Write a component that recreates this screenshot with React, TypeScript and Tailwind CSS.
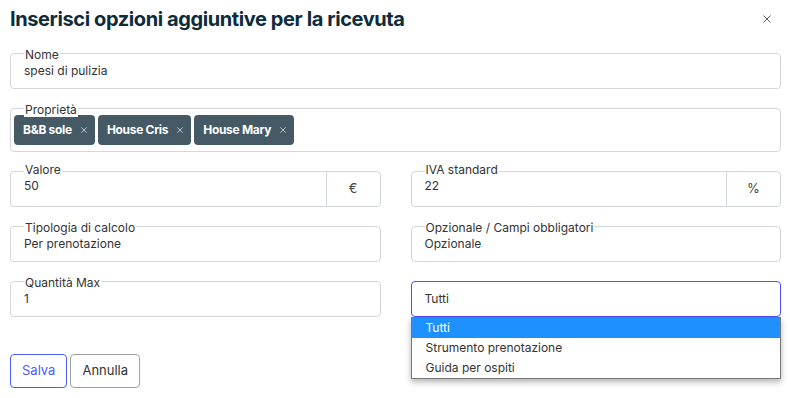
import { ReactNode } from 'react';

const font = { fontFamily: 'Inter, "Liberation Sans", sans-serif' };

function Cross({ size, color, width = 1.3 }: { size: number; color: string; width?: number }) {
  return (
    <svg width={size} height={size} viewBox="0 0 10 10" className="shrink-0">
      <path d="M1 1L9 9M9 1L1 9" stroke={color} strokeWidth={width} strokeLinecap="round" />
    </svg>
  );
}

function Field({ label, children, className = '', high = false }: { label: string; children: ReactNode; className?: string; high?: boolean }) {
  return (
    <div className={`relative border border-[#d3d7dc] rounded-[4px] ${className}`}>
      <span
        className={`absolute ${high ? '-top-[9px]' : '-top-[6px]'} left-[13px] bg-white px-[1px] text-[12px] leading-[14px] text-[#333]`}
      >
        {label}
      </span>
      {children}
    </div>
  );
}

function TextField({ label, value, suffix }: { label: string; value: string; suffix?: string }) {
  return (
    <Field label={label} className="h-[36px] flex" high={!!suffix}>
      <div className={`flex-1 flex items-center pl-[13px] text-[12px] text-[#333] ${suffix ? 'pb-[7px]' : 'pb-[1px]'}`}>
        {value}
      </div>
      {suffix && (
        <div className="w-[54px] border-l border-[#d3d7dc] flex items-center justify-center text-[13px] text-[#444]">
          {suffix}
        </div>
      )}
    </Field>
  );
}

function Chip({ name }: { name: string }) {
  return (
    <div className="h-[30px] flex items-center gap-[9px] pl-[9px] pr-[8px] rounded-[4px] bg-[#455a64] text-white text-[12px] font-bold tracking-[-0.3px]">
      {name}
      <Cross size={6} color="#b9c4ca" width={1.6} />
    </div>
  );
}

export default function App() {
  return (
    <div className="w-[791px] h-[398px] bg-white overflow-hidden" style={font}>
      <div className="relative px-[10px] pt-[5px]">
        <div className="flex items-center justify-between h-[28px]">
          <h1 className="text-[20px] font-bold text-[#0e2b3b] tracking-[-0.4px]">
            Inserisci opzioni aggiuntive per la ricevuta
          </h1>
          <span className="mr-[10px]">
            <Cross size={8} color="#555" width={1.2} />
          </span>
        </div>

        <div className="mt-[20px] flex flex-col gap-[19px]">
          <TextField label="Nome" value="spesi di pulizia" />

          <Field label="Proprietà" className="py-[6px] px-[3px]">
            <div className="flex gap-[3px]">
              <Chip name="B&B sole" />
              <Chip name="House Cris" />
              <Chip name="House Mary" />
            </div>
          </Field>

          <div className="grid grid-cols-2 gap-x-[30px] gap-y-[19px]">
            <TextField label="Valore" value="50" suffix="€" />
            <TextField label="IVA standard" value="22" suffix="%" />
            <TextField label="Tipologia di calcolo" value="Per prenotazione" />
            <TextField label="Opzionale / Campi obbligatori" value="Opzionale" />
            <TextField label="Quantità Max" value="1" />
            <div className="relative">
              <div className="h-[36px] border border-[#4d4dff] rounded-[4px] flex items-center pl-[13px] text-[12px] text-[#333]">
                Tutti
              </div>
              <ul className="absolute left-0 right-0 top-full border border-[#777] bg-white shadow-[0_3px_6px_rgba(0,0,0,0.3)] text-[12px] text-[#333]">
                <li className="h-[20px] leading-[20px] pl-[14px] bg-[#1e90ff] text-white">Tutti</li>
                <li className="h-[20px] leading-[20px] pl-[14px]">Strumento prenotazione</li>
                <li className="h-[20px] leading-[20px] pl-[14px]">Guida per ospiti</li>
              </ul>
            </div>
          </div>
        </div>

        <div className="mt-[37px] flex gap-[3px]">
          <button className="h-[34px] px-[11px] border border-[#4d5cff] rounded-[4px] text-[13px] text-[#4d5cff]">
            Salva
          </button>
          <button className="h-[34px] px-[11px] border border-[#a0a0a0] rounded-[4px] text-[13px] text-[#333]">
            Annulla
          </button>
        </div>
      </div>
    </div>
  );
}
